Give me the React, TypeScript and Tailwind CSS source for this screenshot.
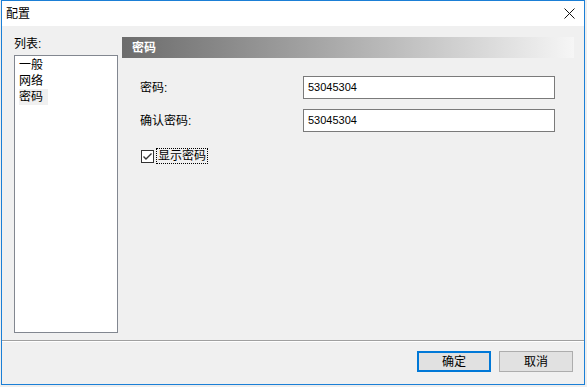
import React from 'react';

const font = { fontFamily: '"Liberation Sans", "Noto Sans CJK SC", sans-serif' };

const listItems = ['一般', '网络', '密码'];

const CloseIcon = () => (
  <svg width="11" height="11" viewBox="0 0 11 11" className="block">
    <path d="M0.5 0.5 L10.5 10.5 M10.5 0.5 L0.5 10.5" stroke="#111" strokeWidth="1" />
  </svg>
);

const CheckBox = () => (
  <div className="w-[13px] h-[13px] border border-[#333] bg-white flex items-center justify-center">
    <svg width="11" height="11" viewBox="0 0 11 11">
      <path d="M1.5 5.5 L4 8 L9.5 2.5" stroke="#333" strokeWidth="1.4" fill="none" />
    </svg>
  </div>
);

const FieldRow = ({ label, value }: { label: string; value: string }) => (
  <div className="flex items-center h-[23px]">
    <div className="w-[181px] pl-[18px] text-[12px] text-black leading-none">{label}</div>
    <div className="w-[252px] h-[23px] border border-[#7a7a7a] bg-white flex items-center pl-[4px] text-[11px] text-black">
      {value}
    </div>
  </div>
);

export default function App() {
  return (
    <div className="w-[587px] h-[387px] bg-[#eeeeee] overflow-hidden" style={font}>
      <div className="ml-[1px] w-[584px] h-[385px] border border-[#1b7fd6] bg-[#f0f0f0] flex flex-col">
        {/* title bar */}
        <div className="h-[25px] bg-white flex items-center justify-between pl-[4px] pr-[9px] shrink-0">
          <span className="text-[12px] text-black">配置</span>
          <CloseIcon />
        </div>

        {/* body */}
        <div className="flex-1 flex pt-[11px] pl-[12px] pr-[9px]">
          <div className="w-[104px] flex flex-col">
            <div className="h-[18px] text-[12px] text-black leading-none pt-[1px]">列表:</div>
            <div className="h-[278px] border border-[#828790] bg-white pt-[1px] pl-[4px]">
              {listItems.map((item, i) => (
                <div
                  key={item}
                  className={`h-[16px] w-[29px] text-[12px] leading-[16px] text-black ${i === 2 ? 'bg-[#f0f0f0]' : ''}`}
                >
                  {item}
                </div>
              ))}
            </div>
          </div>

          <div className="ml-[4px] flex-1 flex flex-col">
            <div className="h-[21px] mr-[1px] bg-gradient-to-r from-[#6c6c6c] to-[#f6f6f6] flex items-center pl-[10px]">
              <span className="text-[12px] font-bold text-white">密码</span>
            </div>

            <div className="mt-[18px] flex flex-col gap-[10px]">
              <FieldRow label="密码:" value="53045304" />
              <FieldRow label="确认密码:" value="53045304" />
            </div>

            <div className="mt-[16px] ml-[19px] flex items-center">
              <CheckBox />
              <div className="ml-[2px] h-[16px] px-[1px] border border-dotted border-black flex items-center text-[12px] text-black">
                显示密码
              </div>
            </div>
          </div>
        </div>

        {/* footer */}
        <div className="border-t border-[#a0a0a0] h-[44px] shrink-0">
          <div className="border-t border-white h-full flex items-start justify-end pt-[9px] pr-[11px] gap-[8px]">
            <button className="w-[74px] h-[21px] border-2 border-[#0078d7] bg-[#e1e1e1] text-[12px] text-black flex items-center justify-center">
              确定
            </button>
            <button className="w-[74px] h-[21px] border border-[#adadad] bg-[#e1e1e1] text-[12px] text-black flex items-center justify-center">
              取消
            </button>
          </div>
        </div>
      </div>
    </div>
  );
}
